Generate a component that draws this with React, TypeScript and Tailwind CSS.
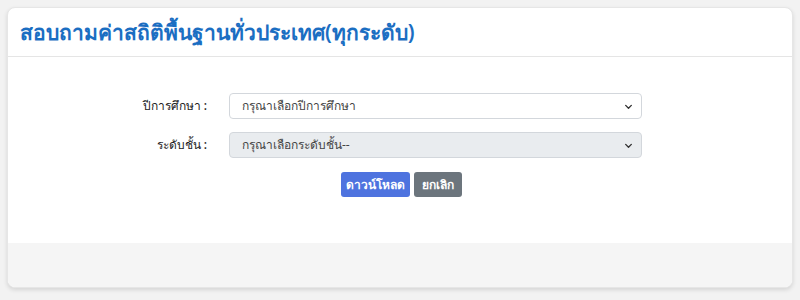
import React from "react";

export default function App() {
  return (
    <div className="min-h-[300px] w-[800px] bg-[#f2f2f2] p-[7px] pb-[12px]" style={{ fontFamily: '"Noto Sans", "Liberation Sans", sans-serif' }}>
      <div className="flex h-[281px] flex-col overflow-hidden rounded-[8px] bg-white shadow-[0_2px_4px_rgba(0,0,0,0.12)] border border-[#e6e6e6]">
        <div className="flex h-[49px] items-center border-b border-[#e5e5e5] px-[12px]">
          <h1 className="text-[21px] font-semibold leading-none text-[#1b6ec2]">สอบถามค่าสถิติพื้นฐานทั่วประเทศ(ทุกระดับ)</h1>
        </div>
        <div className="flex flex-1 flex-col pt-[36px]">
          <div className="flex items-center">
            <label className="w-[201px] pr-[2px] text-right text-[12px] font-medium text-[#222]">ปีการศึกษา :</label>
            <div className="ml-[20px] flex h-[26px] w-[413px] items-center justify-between rounded-[4px] border border-[#d3d7dc] bg-white pl-[12px] pr-[8px] text-[12px] text-[#444]">
              <span>กรุณาเลือกปีการศึกษา</span>
              <svg width="9" height="9" viewBox="0 0 16 16"><path d="M3 6l5 5 5-5" fill="none" stroke="#333" strokeWidth="2.4" strokeLinecap="round" strokeLinejoin="round" /></svg>
            </div>
          </div>
          <div className="mt-[13px] flex items-center">
            <label className="w-[201px] pr-[2px] text-right text-[12px] font-medium text-[#222]">ระดับชั้น :</label>
            <div className="ml-[20px] flex h-[26px] w-[413px] items-center justify-between rounded-[4px] border border-[#d3d7dc] bg-[#e9ecef] pl-[12px] pr-[8px] text-[12px] text-[#444]">
              <span>กรุณาเลือกระดับชั้น--</span>
              <svg width="9" height="9" viewBox="0 0 16 16"><path d="M3 6l5 5 5-5" fill="none" stroke="#333" strokeWidth="2.4" strokeLinecap="round" strokeLinejoin="round" /></svg>
            </div>
          </div>
          <div className="mt-[14px] flex justify-center gap-[4px] pl-[2px]">
            <button className="h-[25px] w-[69px] rounded-[3px] bg-[#4e73df] text-[12px] font-bold text-white">ดาวน์โหลด</button>
            <button className="h-[25px] w-[48px] rounded-[3px] bg-[#6c757d] text-[12px] font-bold text-white">ยกเลิก</button>
          </div>
        </div>
        <div className="h-[44px] bg-[#f5f5f5]" />
      </div>
    </div>
  );
}
